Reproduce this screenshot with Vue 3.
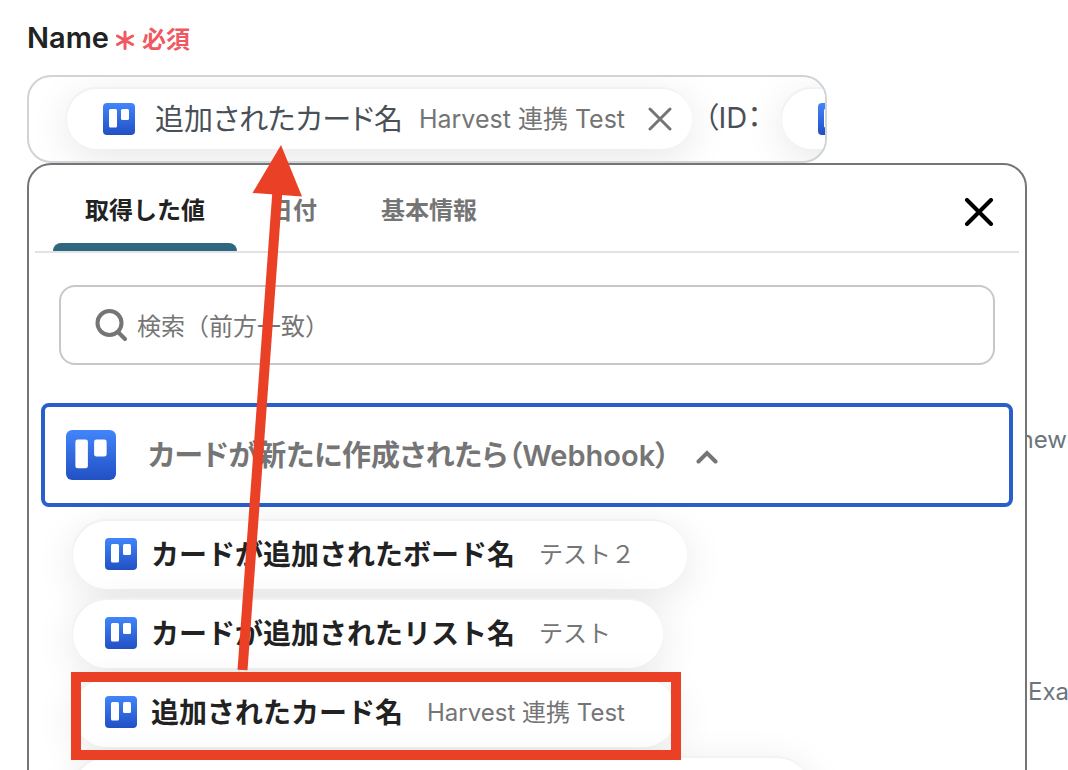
<script setup>
import { ref } from 'vue'

const suffix = ref('（ID：')
const query = ref('')
const tabs = ['取得した値', '日付', '基本情報']
const activeTab = ref(0)
const open = ref(true)
const values = [
  { name: 'カードが追加されたボード名', sample: 'テスト２' },
  { name: 'カードが追加されたリスト名', sample: 'テスト' },
  { name: '追加されたカード名', sample: 'Harvest 連携 Test' },
]
</script>

<template>
  <div class="page">
    <svg class="defs" width="0" height="0" aria-hidden="true">
      <defs>
        <linearGradient id="board-fill" x1="0" y1="0" x2="0" y2="1">
          <stop offset="0" stop-color="#4285fb" />
          <stop offset="1" stop-color="#2150c4" />
        </linearGradient>
        <symbol id="board" viewBox="0 0 32 32">
          <rect width="32" height="32" rx="4" fill="url(#board-fill)" />
          <rect x="6" y="6" width="8" height="18.500" rx="1.5" fill="#fff" />
          <rect x="18" y="6" width="8" height="11" rx="1.5" fill="#fff" />
        </symbol>
      </defs>
    </svg>

    <main class="main">
      <label class="label" for="name">
        <span>Name</span>
        <span class="required">
          <svg class="asterisk" viewBox="0 0 18 20" aria-hidden="true">
            <path d="M9 2V18.5M1.5 6L16.5 14.5M16.5 6L1.5 14.5" />
          </svg>
          必須
        </span>
      </label>

      <div class="field">
        <span class="chip field-chip">
          <svg class="icon"><use href="#board" /></svg>
          <span class="field-name">追加されたカード名</span>
          <span class="field-sample">Harvest 連携 Test</span>
          <button class="remove" type="button" aria-label="削除">
            <svg viewBox="0 0 24 24"><path d="M2 2L22 22M22 2L2 22" /></svg>
          </button>
        </span>
        <input id="name" v-model="suffix" class="text" type="text" />
        <span class="chip field-chip field-next">
          <svg class="icon"><use href="#board" /></svg>
        </span>
      </div>

      <section class="panel">
        <header class="head">
          <div class="tabs" role="tablist">
            <button
              v-for="(tab, i) in tabs"
              :key="tab"
              class="tab"
              :class="{ active: i === activeTab }"
              type="button"
              role="tab"
              :aria-selected="i === activeTab"
              @click="activeTab = i"
            >{{ tab }}</button>
          </div>
          <button class="close" type="button" aria-label="閉じる">
            <svg viewBox="0 0 28 28"><path d="M2 2L26 26M26 2L2 26" /></svg>
          </button>
        </header>

        <label class="search">
          <svg viewBox="0 0 32 32" aria-hidden="true">
            <circle cx="14.500" cy="14" r="12" />
            <path d="M23 23L30 30" />
          </svg>
          <input v-model="query" type="text" aria-label="検索" placeholder="検索（前方一致）" />
        </label>

        <button class="group" type="button" :aria-expanded="open" @click="open = !open">
          <svg class="group-icon"><use href="#board" /></svg>
          <span class="group-name">カードが新たに作成されたら（Webhook）</span>
          <svg class="chevron" viewBox="0 0 22 14"><path d="M2.5 11.5L11 3L19.500 11.5" /></svg>
        </button>

        <ul v-if="open" class="values">
          <li v-for="v in values" :key="v.name">
            <button class="chip value" type="button">
              <svg class="icon"><use href="#board" /></svg>
              <span class="value-name">{{ v.name }}</span>
              <span class="value-sample">{{ v.sample }}</span>
            </button>
          </li>
          <li class="chip value value-next"></li>
        </ul>
      </section>
    </main>

    <aside class="hints">
      <p class="hint end">new</p>
      <p class="hint">Exa</p>
    </aside>

    <svg class="annotation" width="700" height="770" viewBox="0 0 700 770" aria-hidden="true">
      <path d="M242.500 670L277.500 190" fill="none" stroke="#ea4025" stroke-width="10" />
      <path d="M281 145L252.500 193L302 196.500Z" fill="#ea4025" />
      <rect x="76" y="677" width="600" height="78" fill="none" stroke="#ea4025" stroke-width="10" />
    </svg>
  </div>
</template>

<style>
body {
  margin: 0;
  background: #fff;
}
</style>

<style scoped>
.page {
  position: relative;
  display: grid;
  grid-template-columns: minmax(0, 1fr) 41px;
  height: 100vh;
  padding-left: 27px;
  box-sizing: border-box;
  overflow: hidden;
  background: #fff;
  color: #222;
  font-family: Inter, "Noto Sans CJK JP", sans-serif;
  font-size: 24px;
}
.page * {
  box-sizing: border-box;
}
.defs,
.annotation {
  position: absolute;
  top: 0;
  left: 0;
  pointer-events: none;
}
button,
input {
  margin: 0;
  padding: 0;
  border: 0;
  background: none;
  font: inherit;
  color: inherit;
}
button {
  cursor: pointer;
}
svg {
  flex: none;
}
.main {
  min-width: 0;
}
.label {
  display: flex;
  align-items: center;
  gap: 7px;
  height: 75px;
  font-size: 29px;
  font-weight: 600;
}
.required {
  display: flex;
  align-items: center;
  gap: 8px;
  color: #ef5a62;
  font-size: 24px;
}
.asterisk {
  width: 18px;
  height: 20px;
  margin-top: 4px;
  fill: none;
  stroke: #ef5a62;
  stroke-width: 3;
  stroke-linecap: round;
}
.field {
  display: flex;
  align-items: center;
  width: 80%;
  height: 88px;
  padding-left: 38px;
  border: 2px solid #ced4d8;
  border-radius: 24px;
  overflow: hidden;
  white-space: nowrap;
}
.chip {
  display: flex;
  flex: none;
  align-items: center;
  border-radius: 36px;
  background: #fff;
  box-shadow: -1px -2px 0 #f2f2f2, 0 8px 40px rgba(0, 0, 0, 0.1);
  white-space: nowrap;
}
.field-chip {
  height: 60px;
  padding: 0 20px 0 36px;
}
.field-next {
  width: 400px;
}
.icon {
  width: 32px;
  height: 32px;
}
.field-name {
  margin-left: 20px;
  padding-bottom: 4px;
  color: #495057;
  font-size: 29px;
  font-feature-settings: "palt";
}
.field-sample {
  margin-left: 16px;
  padding-bottom: 4px;
  color: #757575;
  font-size: 25px;
}
.remove {
  display: flex;
  margin-left: 23px;
}
.remove svg {
  width: 24px;
  height: 24px;
  fill: none;
  stroke: #757575;
  stroke-width: 3;
  stroke-linecap: round;
}
.text {
  flex: none;
  width: 78px;
  margin-left: 12px;
  padding-bottom: 8px;
  outline: 0;
  color: #495057;
  font-size: 29px;
  font-feature-settings: "palt";
}
.panel {
  border: 2px solid #757575;
  border-radius: 24px;
  background: #fff;
}
.head {
  display: flex;
  justify-content: space-between;
  height: 88px;
  margin: 0 6px;
  padding: 0 24px 0 18px;
  border-bottom: 2px solid #e2e2e2;
}
.tabs {
  display: flex;
}
.tab {
  position: relative;
  padding: 0 32px;
  color: #757575;
  font-weight: 600;
}
.tab.active {
  color: #222;
}
.tab.active::after {
  content: "";
  position: absolute;
  right: 0;
  bottom: 0;
  left: 0;
  height: 8px;
  border-radius: 8px 8px 0 0;
  background: #2f6780;
}
.close {
  display: flex;
  align-items: center;
  padding-top: 8px;
}
.close svg {
  width: 32px;
  height: 28px;
  fill: none;
  stroke: #000;
  stroke-width: 4;
  stroke-linecap: round;
}
.search {
  display: flex;
  align-items: center;
  gap: 10px;
  height: 80px;
  margin: 32px 30px 0;
  padding: 0 34px;
  border: 2px solid #c8c8c8;
  border-radius: 16px;
}
.search svg {
  width: 32px;
  height: 32px;
  fill: none;
  stroke: #757575;
  stroke-width: 4;
  stroke-linecap: round;
}
.search input {
  flex: 1;
  min-width: 0;
  padding-top: 2px;
  outline: 0;
}
.search input::placeholder {
  color: #757575;
  opacity: 1;
}
.group {
  display: flex;
  align-items: center;
  width: calc(100% - 24px);
  height: 104px;
  margin: 38px 12px 0;
  padding: 0 21px;
  border: 4px solid #295fcb;
  border-radius: 8px;
  color: #757575;
  white-space: nowrap;
}
.group-icon {
  width: 50px;
  height: 50px;
  margin-right: 32px;
}
.group-name {
  padding-bottom: 4px;
  font-size: 29px;
  font-weight: 600;
  font-feature-settings: "palt";
}
.chevron {
  width: 22px;
  height: 14px;
  margin-top: 4px;
  margin-left: 26px;
  fill: none;
  stroke: #757575;
  stroke-width: 4;
  stroke-linecap: round;
}
.values {
  display: flex;
  flex-direction: column;
  align-items: flex-start;
  gap: 11px;
  margin: 14px 0 0;
  padding: 0 44px;
  list-style: none;
}
.value {
  height: 68px;
  padding: 0 52px 2px 32px;
}
.value-next {
  width: calc(100% - 170px);
}
.value-name {
  margin-left: 14px;
  padding-bottom: 2px;
  font-size: 28px;
  font-weight: 600;
}
.value-sample {
  margin-left: 24px;
  padding-bottom: 4px;
  color: #757575;
}
.hints {
  overflow: hidden;
  padding: 420px 1px 0;
  color: #6c757d;
  white-space: nowrap;
}
.hint {
  display: flex;
  margin: 0 0 212px;
  line-height: 40px;
}
.hint.end {
  justify-content: flex-end;
}
</style>
